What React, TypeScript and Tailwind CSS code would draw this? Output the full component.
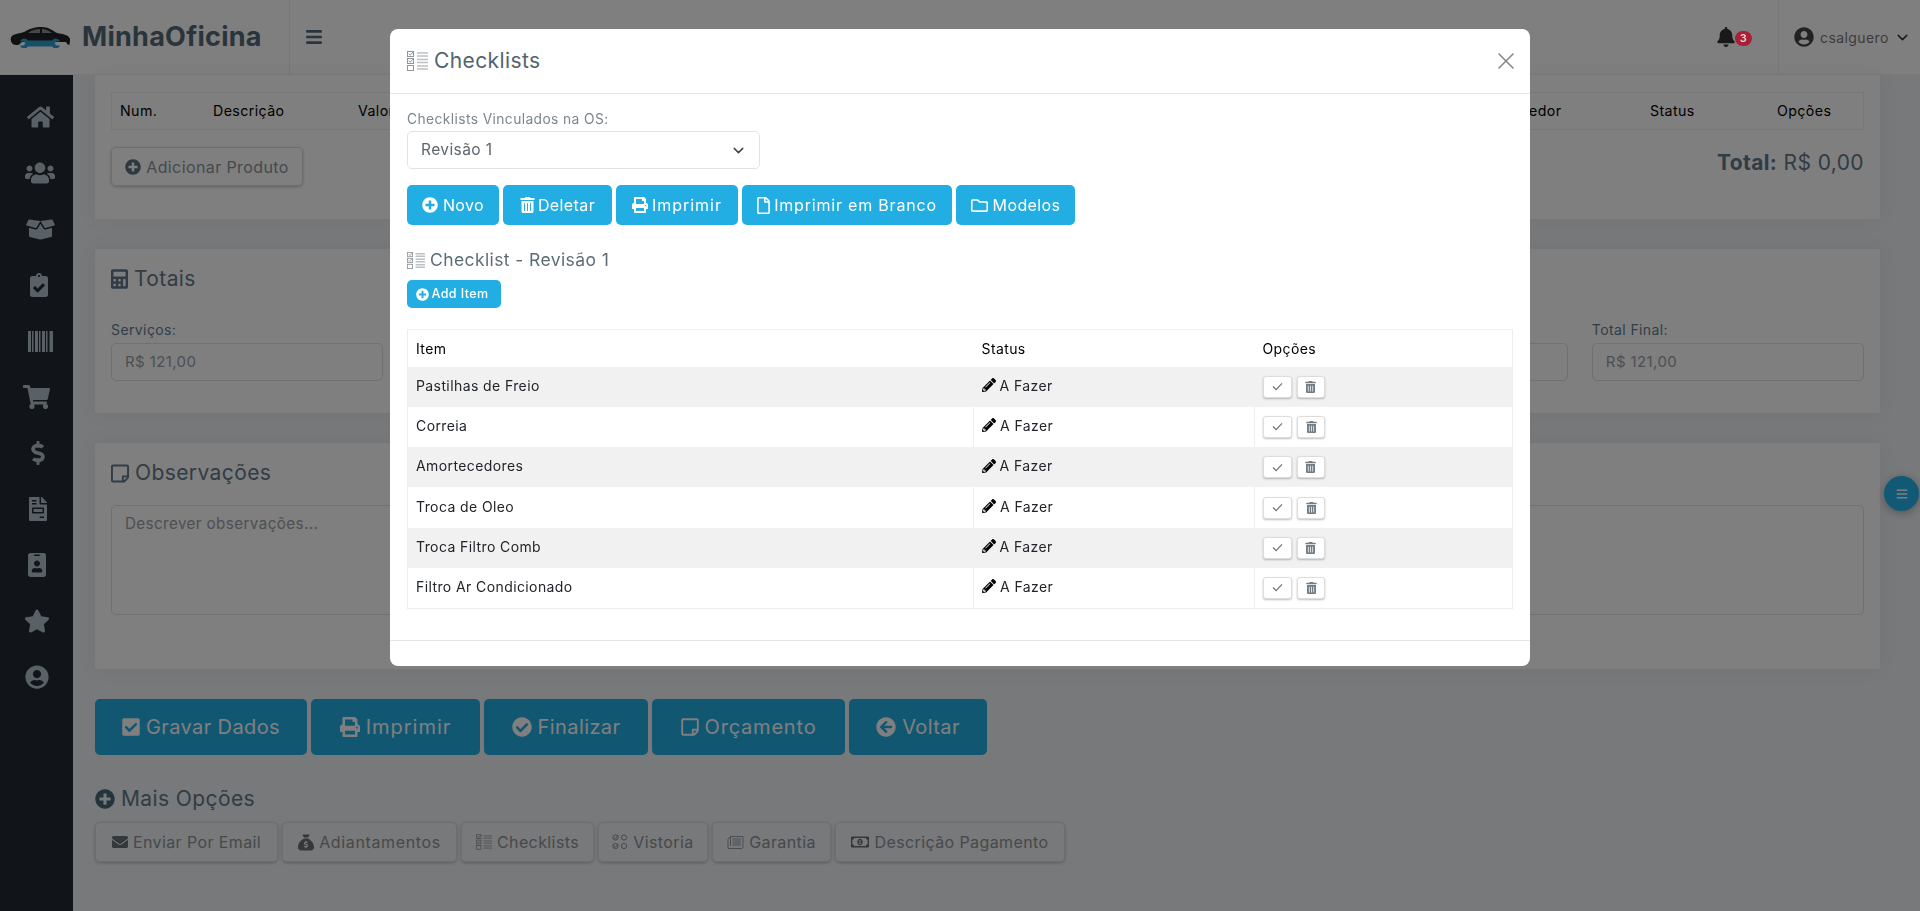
import React from "react";
import { ChevronDown, X } from "lucide-react";
import {
  FaArrowCircleLeft,
  FaBars,
  FaBell,
  FaBoxOpen,
  FaCalculator,
  FaCheckCircle,
  FaCheckSquare,
  FaClipboardCheck,
  FaDollarSign,
  FaEnvelope,
  FaFileInvoice,
  FaHome,
  FaIdBadge,
  FaPencilAlt,
  FaPlusCircle,
  FaPrint,
  FaRegFile,
  FaRegFolder,
  FaRegMoneyBillAlt,
  FaRegStickyNote,
  FaShoppingCart,
  FaStar,
  FaTrashAlt,
  FaUserCircle,
  FaUsers,
} from "react-icons/fa";
import { FaSackDollar } from "react-icons/fa6";

const ChecklistIcon = ({ className }: { className: string }) => (
  <svg viewBox="0 0 21 20" className={className} fill="none" stroke="currentColor">
    <rect x="0.5" y="0.5" width="6" height="5" strokeWidth="1" />
    <path d="M1.8 2.6l1.5 1.6L6.6 0.4" strokeWidth="1" />
    <rect x="0.5" y="7.5" width="6" height="5" strokeWidth="1" />
    <path d="M1.8 9.6l1.5 1.6 2.6-3" strokeWidth="1" />
    <rect x="0.5" y="14.5" width="6" height="5" strokeWidth="1" />
    <path d="M10 2h11M10 5h11M10 8.5h11M10 11.5h11M10 15h11M10 18h11" strokeWidth="1.6" opacity="0.6" />
  </svg>
);

const VistoriaIcon = ({ className }: { className: string }) => (
  <svg viewBox="0 0 16 16" className={className} fill="none" stroke="currentColor" strokeWidth="1">
    <circle cx="3.5" cy="3.5" r="2.6" />
    <path d="M2.2 3.4l1.2 1.2L6.4 1" />
    <circle cx="12" cy="3.5" r="2.6" />
    <circle cx="3.5" cy="12" r="2.6" />
    <path d="M2.2 12l1.2 1.2L6.4 9.6" />
    <circle cx="12" cy="12" r="2.6" />
  </svg>
);

const GarantiaIcon = ({ className }: { className: string }) => (
  <svg viewBox="0 0 16 13" className={className} fill="none" stroke="currentColor" strokeWidth="0.9">
    <path d="M3 0.5h12.500v10.500a1.500 1.500 0 0 1-1.500 1.500H1.500A1 1 0 0 1 0.500 11.500V3.500" />
    <path d="M5 3h8.500M5 5h8.500M5 7h8.500M5 9h8.500M3 0.500L0.500 3.500M3 0.500V10" />
  </svg>
);

const BarcodeIcon = ({ className }: { className: string }) => (
  <svg viewBox="0 0 25 21" className={className} fill="currentColor">
    <rect x="0" y="0" width="3" height="21" />
    <rect x="4" y="0" width="1.500" height="21" />
    <rect x="7" y="0" width="3" height="21" />
    <rect x="11" y="0" width="1.500" height="21" />
    <rect x="14" y="0" width="3" height="21" />
    <rect x="18" y="0" width="1.500" height="21" />
    <rect x="21.500" y="0" width="3.500" height="21" />
  </svg>
);

const CarLogo = () => (
  <svg viewBox="0 0 60 22" className="w-[60px] h-[22px]">
    <path
      d="M1 15c-1-4 1-6 5-7 3-1 6-1 8-2 5-3 10-5 18-5 6 0 10 3 15 6 6 1 12 2 13 6 0 2 0 5-1 6-1 0-2-1-3-3H12c-2 1-3 3-4 3-3 0-6 0-7-4z"
      fill="#202326"
    />
    <path d="M18 7c4-3 8-4 12-4v4zM32 3c4 0 7 2 10 4H32z" fill="#8b8f92" />
    <path
      d="M10 15.500c1-3 5-4 7-2l1 1h24l1-1c2-2 6-1 7 2h-3.500l-2 2 2 2h3.500c-1 3-5 4-7 2l-1-1H18l-1 1c-2 2-6 1-7-2h3.500l2-2-2-2z"
      fill="#2a9fd0"
    />
  </svg>
);

const Cyan = ({ className, text, icon }: { className: string; text: string; icon: React.ReactNode }) => (
  <button className={`${className} flex items-center justify-center rounded-[5px] bg-[#22aee3] text-white`}>
    {icon}
    {text}
  </button>
);

const Outline = ({ className, text, icon }: { className: string; text: string; icon: React.ReactNode }) => (
  <button className={`${className} h-[40px] flex items-center justify-center gap-[5px] rounded-[5px] border border-[#dcdde0] text-[16px] text-[#8c9298] shadow-[0_1px_3px_rgba(0,0,0,0.25)]`}>
    {icon}
    {text}
  </button>
);

const rows = ["Pastilhas de Freio", "Correia", "Amortecedores", "Troca de Oleo", "Troca Filtro Comb", "Filtro Ar Condicionado"];

const sideIcons = [
  { Icon: FaHome, cls: "w-[27px] h-[24px] ml-[7px]" },
  { Icon: FaUsers, cls: "w-[30px] h-[24px] ml-[7px]" },
  { Icon: FaBoxOpen, cls: "w-[29px] h-[23px] ml-[7px]" },
  { Icon: FaClipboardCheck, cls: "w-[18px] h-[24px] ml-[5px]" },
  { Icon: BarcodeIcon, cls: "w-[25px] h-[21px] ml-[7px]" },
  { Icon: FaShoppingCart, cls: "w-[27px] h-[24px]" },
  { Icon: FaDollarSign, cls: "w-[14px] h-[24px] ml-[3px]" },
  { Icon: FaFileInvoice, cls: "w-[18px] h-[24px] ml-[3px]" },
  { Icon: FaIdBadge, cls: "w-[18px] h-[24px] ml-[1px]" },
  { Icon: FaStar, cls: "w-[26px] h-[24px]" },
  { Icon: FaUserCircle, cls: "w-[24px] h-[24px]" },
];

const totais = ["Serviços:", "", "", "", "", "Total Final:"];

const App = () => {
  return (
    <div className="relative h-screen overflow-hidden flex flex-col bg-[#f0f2f5] font-['Inter','Noto_Sans',sans-serif] tracking-[0.025em] text-[#212529]">
      {/* header */}
      <header className="h-[75px] shrink-0 flex bg-white border-b border-[#f2f2f2]">
        <div className="w-[290px] flex items-center gap-[12px] pl-[10px] border-r border-[#eee]">
          <CarLogo />
          <span className="text-[27px] font-bold tracking-[0.01em] text-[#526a76]">MinhaOficina</span>
        </div>
        <div className="flex items-center pl-[15px]">
          <FaBars className="w-[18px] h-[18px] text-[#526a76]" />
        </div>
        <div className="flex-1" />
        <div className="flex items-center pr-[26px]">
          <FaBell className="w-[18px] h-[20px] text-[#333]" />
          <span className="relative z-50 mt-[2px] w-[17px] h-[15px] rounded-full bg-[#ab1f36] text-[#ddd] text-[11px] font-semibold flex items-center justify-center">3</span>
        </div>
        <div className="w-[142px] flex items-center pl-[15px] border-l border-[#eee] text-[#777]">
          <FaUserCircle className="w-[20px] h-[20px] text-[#444]" />
          <span className="ml-[6px] text-[14px]">csalguero</span>
          <ChevronDown className="ml-[5px] w-[17px] h-[17px] text-[#333]" />
        </div>
      </header>

      <div className="flex flex-1 min-h-0">
        {/* sidebar */}
        <nav className="w-[73px] shrink-0 flex flex-col items-center pt-[14px] bg-[#222a34]">
          {sideIcons.map(({ Icon, cls }, i) => (
            <div key={i} className="h-[56px] flex items-center justify-center">
              <Icon className={`${cls} text-[#b4c2cc]`} />
            </div>
          ))}
        </nav>

        {/* conteudo */}
        <main className="flex-1 min-w-0 pl-[22px] pr-[40px]">
          <section className="h-[144px] bg-white px-[16px] pt-[17px] shadow-[0_0_20px_rgba(0,0,0,0.05)]">
            <div className="h-[38px] border border-[#eee] px-[8px] grid grid-cols-[93px_145px_1122px_170px_127px_1fr] items-center text-[14.2px] text-black">
              <span>Num.</span>
              <span>Descrição</span>
              <span>Valor</span>
              <span>Fornecedor</span>
              <span>Status</span>
              <span>Opções</span>
            </div>
            <div className="mt-[17px] flex items-start justify-between">
              <button className="w-[192px] h-[39px] flex items-center justify-center gap-[5px] rounded-[5px] border border-[#dcdde0] text-[16px] text-[#8c9298] shadow-[0_1px_3px_rgba(0,0,0,0.25)]">
                <FaPlusCircle className="w-[16px] h-[16px] text-[#5a7080]" />
                Adicionar Produto
              </button>
              <div className="text-[21px] text-[#62798a]">
                <b className="font-bold">Total:</b> R$ 0,00
              </div>
            </div>
          </section>

          <section className="mt-[30px] h-[164px] bg-white px-[16px] pt-[16px] shadow-[0_0_20px_rgba(0,0,0,0.05)]">
            <h2 className="h-[28px] flex items-center gap-[6px] text-[21px] text-[#62798a]">
              <FaCalculator className="w-[17px] h-[20px]" />
              Totais
            </h2>
            <div className="mt-[26px] grid grid-cols-6 gap-x-[24px]">
              {totais.map((t, i) => (
                <div key={i}>
                  <div className="h-[21px] text-[14px] text-[#5f7d8e]">{t}</div>
                  <div className="mt-[3px] h-[38px] flex items-center px-[13px] rounded-[5px] border border-[#e0e0e0] text-[15px] text-[#98a0a6]">
                    {t ? "R$ 121,00" : ""}
                  </div>
                </div>
              ))}
            </div>
          </section>

          <section className="mt-[30px] h-[226px] bg-white px-[16px] pt-[16px] shadow-[0_0_20px_rgba(0,0,0,0.05)]">
            <h2 className="h-[28px] flex items-center gap-[6px] text-[21px] text-[#62798a]">
              <FaRegStickyNote className="w-[18px] h-[21px]" />
              Observações
            </h2>
            <div className="mt-[18px] h-[110px] rounded-[5px] border border-[#e0e0e0] px-[13px] py-[7px] text-[15.2px] text-[#98a0a6]">
              Descrever observações...
            </div>
          </section>

          <div className="mt-[30px] flex gap-[4px]">
            <Cyan className="w-[212px] h-[56px] text-[20px] gap-[6px]" text="Gravar Dados" icon={<FaCheckSquare className="w-[18px] h-[20px]" />} />
            <Cyan className="w-[169px] h-[56px] text-[20px] gap-[6px] tracking-[0.05em]" text="Imprimir" icon={<FaPrint className="w-[20px] h-[20px]" />} />
            <Cyan className="w-[164px] h-[56px] text-[20px] gap-[6px]" text="Finalizar" icon={<FaCheckCircle className="w-[20px] h-[20px]" />} />
            <Cyan className="w-[193px] h-[56px] text-[20px] gap-[6px] tracking-[0.04em]" text="Orçamento" icon={<FaRegStickyNote className="w-[18px] h-[20px]" />} />
            <Cyan className="w-[138px] h-[56px] text-[20px] gap-[6px]" text="Voltar" icon={<FaArrowCircleLeft className="w-[20px] h-[20px]" />} />
          </div>

          <h2 className="mt-[30px] h-[28px] flex items-center gap-[6px] text-[21px] text-[#62798a]">
            <FaPlusCircle className="w-[20px] h-[20px] text-[#4a6674]" />
            Mais Opções
          </h2>
          <div className="mt-[9px] flex gap-[4px]">
            <Outline className="w-[183px]" text="Enviar Por Email" icon={<FaEnvelope className="w-[16px] h-[16px] text-[#6a7076]" />} />
            <Outline className="w-[175px] tracking-[0.04em]" text="Adiantamentos" icon={<FaSackDollar className="w-[16px] h-[17px] text-[#6a7076]" />} />
            <Outline className="w-[133px]" text="Checklists" icon={<ChecklistIcon className="w-[16px] h-[16px]" />} />
            <Outline className="w-[110px]" text="Vistoria" icon={<VistoriaIcon className="w-[16px] h-[16px]" />} />
            <Outline className="w-[119px]" text="Garantia" icon={<GarantiaIcon className="w-[17px] h-[13px]" />} />
            <Outline className="w-[230px]" text="Descrição Pagamento" icon={<FaRegMoneyBillAlt className="w-[18px] h-[16px] text-[#6a7076]" />} />
          </div>
        </main>
      </div>

      <button className="absolute left-[1884px] top-[476px] w-[35px] h-[35px] rounded-full bg-[#25b3ec] text-white flex items-center justify-center shadow-[0_2px_8px_rgba(0,0,0,0.3)]">
        <FaBars className="w-[12px] h-[12px]" />
      </button>

      {/* modal */}
      <div className="fixed inset-0 bg-black/50 flex justify-center items-start pt-[29px]">
        <div className="w-[1140px] h-[637px] bg-white rounded-[8px] flex flex-col">
          <div className="h-[65px] shrink-0 pl-[17px] pr-[10px] flex items-center border-b border-[#e4e4e4]">
            <ChecklistIcon className="w-[21px] h-[20px] text-[#8e979d]" />
            <h1 className="ml-[6px] text-[21px] text-[#52646f]">Checklists</h1>
            <X className="ml-auto w-[28px] h-[28px] text-[#808080]" strokeWidth={1.2} />
          </div>
          <div className="flex-1 px-[17px] pt-[15px]">
            <label className="block h-[22px] text-[13.8px] text-[#7d868d]">Checklists Vinculados na OS:</label>
            <div className="w-[353px] h-[38px] flex items-center justify-between pl-[13px] pr-[12px] rounded-[5px] border border-[#e2e2e2] text-[15.5px] text-[#5d666d]">
              Revisão 1
              <ChevronDown className="w-[17px] h-[17px] text-[#444]" />
            </div>
            <div className="mt-[16px] flex gap-[4px]">
              <Cyan className="w-[92px] h-[40px] text-[16px] gap-[5px]" text="Novo" icon={<FaPlusCircle className="w-[16px] h-[16px]" />} />
              <Cyan className="w-[109px] h-[40px] text-[16px] gap-[3px]" text="Deletar" icon={<FaTrashAlt className="w-[15px] h-[16px]" />} />
              <Cyan className="w-[122px] h-[40px] text-[16px] gap-[4px] tracking-[0.06em]" text="Imprimir" icon={<FaPrint className="w-[16px] h-[16px]" />} />
              <Cyan className="w-[210px] h-[40px] text-[16px] gap-[4px] tracking-[0.05em]" text="Imprimir em Branco" icon={<FaRegFile className="w-[13px] h-[17px]" />} />
              <Cyan className="w-[119px] h-[40px] text-[16px] gap-[5px]" text="Modelos" icon={<FaRegFolder className="w-[17px] h-[17px]" />} />
            </div>
            <h2 className="mt-[22px] h-[26px] flex items-center gap-[5px] text-[17.5px] text-[#5d6d78]">
              <ChecklistIcon className="w-[18px] h-[17px] text-[#8e979d]" />
              Checklist - Revisão 1
            </h2>
            <div className="mt-[7px]">
              <Cyan className="w-[94px] h-[28px] pr-[4px] text-[12.5px] font-medium gap-[3px]" text="Add Item" icon={<FaPlusCircle className="w-[13px] h-[13px]" />} />
            </div>
            <table className="mt-[21px] w-[1106px] table-fixed border border-[#eee] text-[14px]">
              <colgroup>
                <col className="w-[566px]" />
                <col className="w-[281px]" />
                <col />
              </colgroup>
              <thead>
                <tr className="h-[37px] text-left text-black">
                  <th className="pl-[8px] font-normal">Item</th>
                  <th className="pl-[8px] font-normal">Status</th>
                  <th className="pl-[8px] font-normal">Opções</th>
                </tr>
              </thead>
              <tbody>
                {rows.map((r) => (
                  <tr key={r} className="h-[40.3px] odd:bg-[#f1f1f1] [&:nth-child(even)>td]:border-l [&:nth-child(even)>td]:border-[#eee]">
                    <td className="pl-[8px] pb-[3px]">{r}</td>
                    <td className="pl-[8px] pb-[3px]">
                      <span className="flex items-center gap-[4px]">
                        <FaPencilAlt className="w-[14px] h-[14px] text-black" />
                        A Fazer
                      </span>
                    </td>
                    <td className="pl-[8px]">
                      <div className="flex gap-[5px]">
                        <button className="w-[29px] h-[22px] flex items-center justify-center rounded-[3px] border border-[#ddd] bg-white shadow-[0_1px_2px_rgba(0,0,0,0.25)] text-[#6c757d]">
                          <svg viewBox="0 0 12 10" className="w-[11px] h-[9px]" fill="none" stroke="currentColor" strokeWidth="1.4">
                            <path d="M1 5l3.500 3.500L11 1.500" />
                          </svg>
                        </button>
                        <button className="w-[28px] h-[22px] flex items-center justify-center rounded-[3px] border border-[#ddd] bg-white shadow-[0_1px_2px_rgba(0,0,0,0.25)] text-[#737d85]">
                          <FaTrashAlt className="w-[11px] h-[12px]" />
                        </button>
                      </div>
                    </td>
                  </tr>
                ))}
              </tbody>
            </table>
          </div>
          <div className="h-[26px] shrink-0 border-t border-[#e4e4e4]" />
        </div>
      </div>
    </div>
  );
};

export default App;
